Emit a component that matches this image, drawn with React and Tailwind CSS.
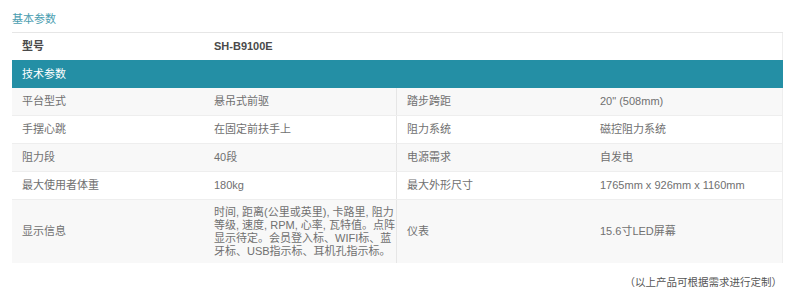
export default function App() {
  const font = { fontFamily: '"Liberation Sans", "Noto Sans CJK SC", sans-serif' };
  const rows = [
    ["平台型式", "悬吊式前驱", "踏步跨距", "20\" (508mm)"],
    ["手摆心跳", "在固定前扶手上", "阻力系统", "磁控阻力系统"],
    ["阻力段", "40段", "电源需求", "自发电"],
    ["最大使用者体重", "180kg", "最大外形尺寸", "1765mm x 926mm x 1160mm"],
  ];
  return (
    <div className="w-[790px] h-[297px] bg-white text-[11px] text-[#707070]" style={font}>
      <div className="pl-[12px] pt-[13px] leading-[13px] h-[32px] text-[#4a9db0]">基本参数</div>
      <div className="ml-[12px] w-[771px] border-t border-[#e6e6e6]">
        <div className="flex h-[27px] items-center bg-white border-r border-[#eeeeee] text-[#4a4a4a] font-bold">
          <div className="w-[192px] pl-[10px]">型号</div>
          <div className="pl-[10px]">SH-B9100E</div>
        </div>
        <div className="flex h-[28px] items-center bg-[#248fa5] text-white pl-[10px]">技术参数</div>
        {rows.map((r, i) => (
          <div
            key={i}
            className={`flex h-[28px] border-b border-r border-[#eeeeee] ${i % 2 === 0 ? "bg-[#f8f8f8]" : "bg-white"}`}
          >
            <div className="w-[192px] pl-[10px] flex items-center">{r[0]}</div>
            <div className="w-[193px] pl-[10px] flex items-center border-r border-[#e6e6e6]">{r[1]}</div>
            <div className="w-[193px] pl-[10px] flex items-center">{r[2]}</div>
            <div className="flex-1 pl-[10px] flex items-center">{r[3]}</div>
          </div>
        ))}
        <div className="flex h-[63px] bg-[#f8f8f8] border-r border-[#eeeeee]">
          <div className="w-[192px] pl-[10px] flex items-center">显示信息</div>
          <div className="w-[193px] pl-[10px] flex flex-col justify-center leading-[13px] border-r border-[#e6e6e6] whitespace-nowrap">
            <div>时间, 距离(公里或英里), 卡路里, 阻力</div>
            <div>等级, 速度, RPM, 心率, 瓦特值。点阵</div>
            <div>显示待定。会员登入标、WIFI标、蓝</div>
            <div>牙标、USB指示标、耳机孔指示标。</div>
          </div>
          <div className="w-[193px] pl-[10px] flex items-center">仪表</div>
          <div className="flex-1 pl-[10px] flex items-center">15.6寸LED屏幕</div>
        </div>
      </div>
      <div className="mt-[12px] pr-[8px] text-right leading-[14px] text-[10.5px] text-[#555]">（以上产品可根据需求进行定制）</div>
    </div>
  );
}
